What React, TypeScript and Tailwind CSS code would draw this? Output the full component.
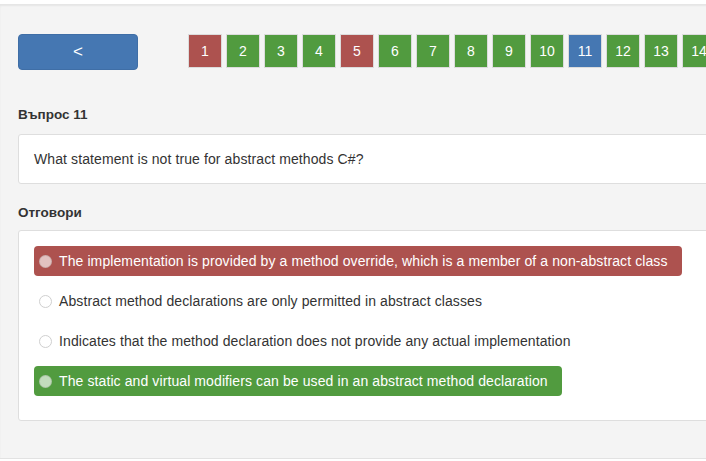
import React from "react";

const boxes: { n: number; c: "r" | "g" | "b" }[] = [
  { n: 1, c: "r" },
  { n: 2, c: "g" },
  { n: 3, c: "g" },
  { n: 4, c: "g" },
  { n: 5, c: "r" },
  { n: 6, c: "g" },
  { n: 7, c: "g" },
  { n: 8, c: "g" },
  { n: 9, c: "g" },
  { n: 10, c: "g" },
  { n: 11, c: "b" },
  { n: 12, c: "g" },
  { n: 13, c: "g" },
  { n: 14, c: "g" },
];

const answers: { t: string; c: "r" | "g" | "n" }[] = [
  { t: "The implementation is provided by a method override, which is a member of a non-abstract class", c: "r" },
  { t: "Abstract method declarations are only permitted in abstract classes", c: "n" },
  { t: "Indicates that the method declaration does not provide any actual implementation", c: "n" },
  { t: "The static and virtual modifiers can be used in an abstract method declaration", c: "g" },
];

function Box({ n, c }: { n: number; c: "r" | "g" | "b" }) {
  const bg = c === "r" ? "bg-[#ad524f]" : c === "g" ? "bg-[#519b3f]" : "bg-[#4577b2]";
  return (
    <div
      className={`${bg} w-[34px] h-[34px] shrink-0 border border-[#dcdcdc] flex items-center justify-center text-white text-[14px]`}
    >
      {n}
    </div>
  );
}

function Answer({ t, c }: { t: string; c: "r" | "g" | "n" }) {
  const colored = c !== "n";
  const bg = c === "r" ? "bg-[#ad524f] text-white" : c === "g" ? "bg-[#519b3f] text-white" : "text-[#333]";
  return (
    <div className="flex mb-[10px]">
      <div className={`${bg} h-[30px] rounded-[4px] flex items-center pl-[5px] pr-[14px]`}>
        <span
          className={`w-[13px] h-[13px] rounded-full shrink-0 mr-[7px] ${
            colored ? "bg-white/65 border border-black/10" : "bg-white border border-[#cfcfcf]"
          }`}
        />
        <span className="text-[14px] tracking-[0.1px] whitespace-nowrap">{t}</span>
      </div>
    </div>
  );
}

export default function App() {
  return (
    <div
      className="w-[706px] h-[461px] overflow-hidden bg-white"
      style={{ fontFamily: '"Liberation Sans", Arial, Helvetica, sans-serif' }}
    >
      <div className="h-[4px] bg-white" />
      <div className="h-[455px] bg-[#f4f4f4] border-b border-[#e2e2e2] shadow-[inset_0_2px_2px_rgba(0,0,0,0.06)] pl-[18px] pt-[30px] w-[760px]">
        <div className="flex items-start">
          <div className="w-[120px] h-[36px] rounded-[4px] bg-[#4577b2] border border-[#3f6ea6] flex items-center justify-center text-white text-[17px]">
            &lt;
          </div>
          <div className="flex gap-[4px] ml-[50px]">
            {boxes.map((b) => (
              <Box key={b.n} n={b.n} c={b.c} />
            ))}
          </div>
        </div>

        <div className="mt-[35px] text-[13.5px] font-bold text-[#333] leading-[20px]">Въпрос 11</div>
        <div className="mt-[9px] h-[50px] bg-white border border-[#dedede] rounded-[3px] flex items-center pl-[15px] text-[14px] tracking-[0.1px] text-[#333]">
          What statement is not true for abstract methods C#?
        </div>

        <div className="mt-[19px] text-[13.5px] font-bold text-[#333] leading-[20px]">Отговори</div>
        <div className="mt-[7px] h-[191px] bg-white border border-[#dedede] rounded-[3px] pt-[15px] pl-[15px]">
          {answers.map((a, i) => (
            <Answer key={i} t={a.t} c={a.c} />
          ))}
        </div>
      </div>
    </div>
  );
}
